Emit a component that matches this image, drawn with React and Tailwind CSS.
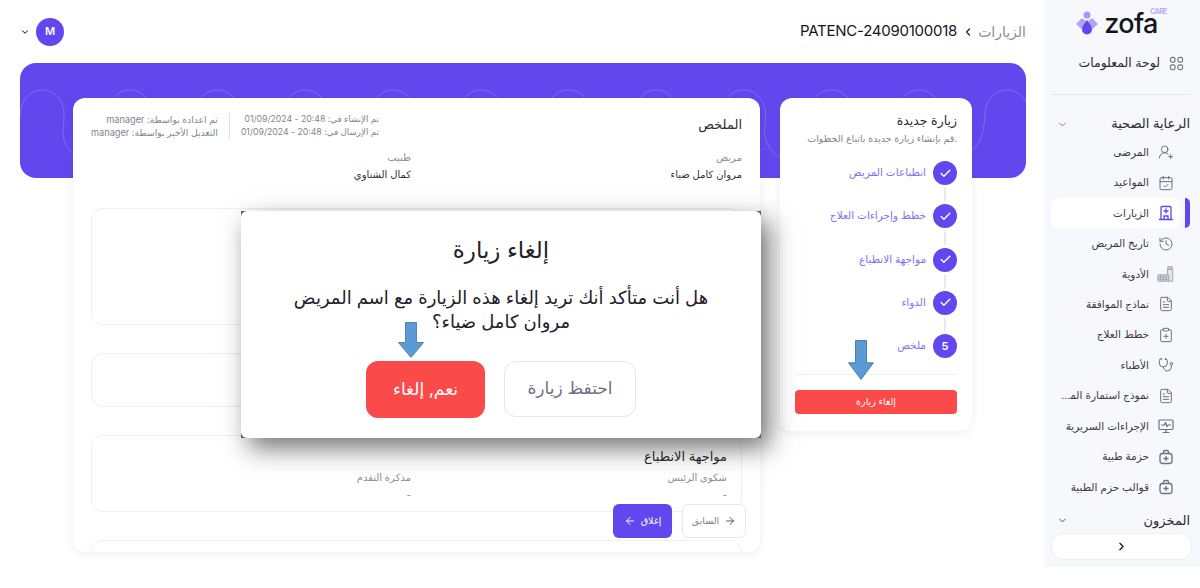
import {
  ArrowLeft, ArrowRight, CalendarCheck, Check, ChevronDown, ChevronLeft, ChevronRight,
  ClipboardPlus, FileText, History, Stethoscope, UserRoundPlus,
} from "lucide-react";

const fontStack = "font-['Inter','Noto_Sans','DejaVu_Sans',sans-serif]";

function MedsIcon() {
  return (
    <svg viewBox="0 0 20 20" className="w-[18px] h-[18px]" fill="none" stroke="#9aa1b5" strokeWidth="1">
      <rect x="12" y="2" width="5" height="3" fill="#c9cdd9" />
      <path d="M11.500 5h6v13h-6z" fill="#e2e4ec" />
      <path d="M1 11h12v7H1z" fill="#dfe2ea" />
      <path d="M1 13.500h12M1 16h12M4 11v7M7 11v7M10 11v7" />
    </svg>
  );
}

function GridIcon({ className }) {
  return (
    <svg viewBox="0 0 16 16" className={className} fill="none" stroke="currentColor" strokeWidth="1.200">
      <rect x="1.500" y="1.500" width="5" height="5" rx="2" />
      <rect x="9.500" y="1.500" width="5" height="5" rx="2" />
      <rect x="1.500" y="9.500" width="5" height="5" rx="2" />
      <rect x="9.500" y="9.500" width="5" height="5" rx="2" />
    </svg>
  );
}

function ClinicIcon({ className }) {
  return (
    <svg viewBox="0 0 16 16" className={className} fill="none" stroke="currentColor" strokeWidth="1.300" strokeLinecap="round">
      <path d="M3 14.500V2.500a1 1 0 0 1 1-1h8a1 1 0 0 1 1 1v12M1.500 14.500h13" />
      <path d="M8 4v4M6 6h4M6 14.500v-3.500h4v3.500" />
    </svg>
  );
}

function ScreenIcon({ className }) {
  return (
    <svg viewBox="0 0 16 16" className={className} fill="none" stroke="currentColor" strokeWidth="1.200" strokeLinecap="round" strokeLinejoin="round">
      <rect x="1" y="2" width="14" height="9.500" rx="1" />
      <path d="M8 11.500V14.500M5 14.500h6M3.500 7h3l1-2.500 1.500 4 1-1.500h2.500" />
    </svg>
  );
}

function KitIcon({ className }) {
  return (
    <svg viewBox="0 0 16 16" className={className} fill="none" stroke="currentColor" strokeWidth="1.300" strokeLinecap="round">
      <rect x="2" y="4.500" width="12" height="10" rx="2.500" />
      <path d="M5.500 4.500V3a1.500 1.500 0 0 1 1.500-1.500h2A1.500 1.500 0 0 1 10.500 3v1.500M8 7.500v4M6 9.500h4" />
    </svg>
  );
}

const navItems = [
  { label: "المرضى", Icon: UserRoundPlus },
  { label: "المواعيد", Icon: CalendarCheck },
  { label: "الزيارات", Icon: ClinicIcon, active: true },
  { label: "تاريخ المريض", Icon: History },
  { label: "الأدوية", Icon: MedsIcon },
  { label: "نماذج الموافقة", Icon: FileText },
  { label: "خطط العلاج", Icon: ClipboardPlus },
  { label: "الأطباء", Icon: Stethoscope },
  { label: "نموذج استمارة المريض", Icon: FileText },
  { label: "الإجراءات السريرية", Icon: ScreenIcon },
  { label: "حزمة طبية", Icon: KitIcon },
  { label: "قوالب حزم الطبية", Icon: KitIcon },
];

const steps = ["انطباعات المريض", "خطط وإجراءات العلاج", "مواجهة الانطباع", "الدواء"];

function Logo() {
  return (
    <div dir="ltr" className="flex items-center justify-center gap-[5px] h-[46px] pr-[15px]">
      <svg viewBox="0 0 24 24" className="w-[24px] h-[24px]">
        <circle cx="12" cy="4" r="3.500" fill="#a996f5" />
        <path d="M1 13l5.500-5.500c2 0 4 2 5 4-1 3-3 6-5 6.500z" fill="#b3a2f6" />
        <path d="M23 13l-5.500-5.500c-2 0-4 2-5 4 1 3 3 6 5 6.500z" fill="#b3a2f6" />
        <path d="M12 9c2 3 5 6 5 9.500a5 5 0 0 1-10 0c0-3.500 3-6.500 5-9.500z" fill="#6347ee" />
      </svg>
      <div className="relative text-[27px] leading-none font-medium text-[#15151c] font-['Inter',sans-serif] tracking-tight">
        zofa
        <span className="absolute right-[-9px] top-[-2px] text-[7px] font-bold text-[#b9acf8]">CARE</span>
      </div>
    </div>
  );
}

function Sidebar() {
  return (
    <aside className="w-[156px] h-[567px] shrink-0 bg-[#f7f8fc] flex flex-col pr-[3px] pl-[7px]">
      <Logo />
      <div className="flex items-center gap-[9px] h-[26px] mt-[4px] pr-[13px] text-[12.500px] text-[#2b2b33]">
        <GridIcon className="w-[15px] h-[15px] text-[#6b7280]" />
        <span>لوحة المعلومات</span>
      </div>
      <div className="h-px bg-[#e3e5ec] mt-[18px] mb-[16px] mr-[7px]" />
      <div className="flex items-center justify-between h-[26px] mr-[7px] text-[13px] text-[#2b2b33]">
        <span>الرعاية الصحية</span>
        <ChevronDown className="w-[11px] h-[11px] text-[#7a62f0] ml-[6px]" />
      </div>
      <nav className="flex flex-col">
        {navItems.map(({ label, Icon, active }) => (
          <div key={label} className="relative flex items-center h-[30.450px]">
            {active && (
              <span className="absolute right-[7px] top-0 w-[5px] h-[30px] rounded-r-full bg-[#6347ee]" />
            )}
            <div className={"flex items-center gap-[8px] h-[30px] w-[129px] mr-[17px] pr-[5px] pl-[9px] rounded-lg " + (active ? "bg-white" : "")}>
              <span className={"w-[18px] flex justify-center shrink-0 " + (active ? "text-[#6347ee]" : "text-[#6b7280]")}>
                <Icon className="w-[16px] h-[16px]" strokeWidth={1.5} />
              </span>
              <span className="pt-[1px] text-[10.500px] text-[#3a3a44] truncate">{label}</span>
            </div>
          </div>
        ))}
      </nav>
      <div className="flex items-center justify-between h-[26px] mt-[5px] mr-[7px] text-[13px] text-[#2b2b33]">
        <span>المخزون</span>
        <ChevronDown className="w-[11px] h-[11px] text-[#444] ml-[6px]" />
      </div>
      <button className="h-[27px] w-[141px] mr-[5px] bg-white border border-[#eceef3] rounded-xl flex items-center justify-center text-[#222]">
        <ChevronRight className="w-[13px] h-[13px]" strokeWidth={2.500} />
      </button>
    </aside>
  );
}

function BannerWaves() {
  const centers = Array.from({ length: 12 }, (_, i) => 42 + i * 87.700);
  return (
    <svg className="absolute inset-0 w-full h-full" viewBox="20 63 1006 115" fill="none" stroke="#ffffff" strokeOpacity="0.18" preserveAspectRatio="none">
      {centers.map((c) => (
        <path
          key={c}
          d={`M${c - 22} 118 C${c - 22} 100 ${c - 12} 90 ${c} 90 C${c + 14} 90 ${c + 22} 102 ${c + 22} 114 C${c + 22} 128 ${c + 18} 136 ${c + 26} 148 C${c + 32} 156 ${c + 40} 160 ${c + 46} 156 C${c + 58} 150 ${c + 65} 136 ${c + 65.700} 118`}
        />
      ))}
    </svg>
  );
}

function Field({ label, value }) {
  return (
    <div>
      <div className="text-[10px] leading-[14px] text-[#8a8f9c]">{label}</div>
      <div className="text-[10px] leading-[14px] mt-[3px] text-[#33333b]">{value}</div>
    </div>
  );
}

function SummaryCard() {
  return (
    <section className="relative w-[687px] h-[454px] bg-white rounded-xl shadow-[0_2px_10px_rgba(30,30,60,0.07)] overflow-hidden px-[18px] pt-[15px]">
      <div className="flex justify-between items-start">
        <h2 className="text-[13px] mt-[2px] text-[#2b2b33]">الملخص</h2>
        <div className="flex items-center leading-[13px] text-[#80848f]">
          <div className="flex flex-col text-[8.700px] pl-[11px] border-l border-[#dfe1e7]">
            <span>تم الإنشاء في: 20:48 - 01/09/2024</span>
            <span>تم الإرسال في: 20:48 - 01/09/2024</span>
          </div>
          <div className="flex flex-col text-[9.200px] pr-[11px]">
            <span>تم اعداده بواسطة: manager</span>
            <span>التعديل الأخير بواسطة: manager</span>
          </div>
        </div>
      </div>
      <div className="grid grid-cols-[331px_1fr] mt-[11px]">
        <Field label="مريض" value="مروان كامل ضياء" />
        <Field label="طبيب" value="كمال الشناوي" />
      </div>
      <div className="h-[117px] mt-[27px] border border-[#eeeff3] rounded-xl" />
      <div className="h-[54px] mt-[28px] border border-[#eeeff3] rounded-xl" />
      <div className="h-[77px] mt-[28px] border border-[#eeeff3] rounded-xl px-[14px] pt-[11px]">
        <h3 className="text-[13px] text-[#2b2b33]">مواجهة الانطباع</h3>
        <div className="grid grid-cols-[316px_1fr] mt-[3px]">
          <div>
            <div className="text-[10px] leading-[14px] text-[#8a8f9c]">شكوى الرئيس</div>
            <div className="text-[10px] leading-[14px] mt-[4px] text-[#8a8f9c]">-</div>
          </div>
          <div>
            <div className="text-[10px] leading-[14px] text-[#8a8f9c]">مذكرة التقدم</div>
            <div className="text-[10px] leading-[14px] mt-[4px] text-[#8a8f9c]">-</div>
          </div>
        </div>
      </div>
      <div className="h-[40px] mt-[28px] border border-[#eeeff3] rounded-xl" />
      <div className="absolute left-[540px] top-[406px] flex gap-[10px]">
        <button className="w-[64px] h-[34px] bg-white border border-[#e6e8ee] rounded-md flex items-center justify-center gap-[5px] text-[9.500px] text-[#7a7f8c]">
          <ArrowRight className="w-[12px] h-[12px] text-[#555b6b]" />
          <span>السابق</span>
        </button>
        <button className="w-[59px] h-[34px] bg-[#6347ee] rounded-md flex items-center justify-center gap-[5px] text-[9.500px] text-white">
          <span>إغلاق</span>
          <ArrowLeft className="w-[12px] h-[12px]" />
        </button>
      </div>
    </section>
  );
}

function WizardCard() {
  return (
    <section className="w-[192px] h-[333px] bg-white rounded-xl shadow-[0_2px_10px_rgba(30,30,60,0.07)] px-[15px] pt-[14px]">
      <h2 className="text-[12.500px] leading-[18px] text-[#2b2b33]">زيارة جديدة</h2>
      <p dir="ltr" className="text-[9.500px] leading-[14px] mt-[2px] text-right text-[#80848f] whitespace-nowrap">قم بإنشاء زيارة جديدة باتباع الخطوات.</p>
      <ol className="mt-[15px]">
        {steps.map((s) => (
          <li key={s}>
            <div className="flex items-center gap-[7px] h-[24px] text-[10.500px] text-[#8470f5]">
              <span className="w-[24px] h-[24px] rounded-full bg-[#6347ee] flex items-center justify-center shrink-0">
                <Check className="w-[13px] h-[13px] text-white" strokeWidth={2.500} />
              </span>
              <span className="whitespace-nowrap">{s}</span>
            </div>
            <div className="w-[2px] h-[19.300px] mr-[11px] py-[3px]">
              <div className="h-full bg-[#e9eaef]" />
            </div>
          </li>
        ))}
        <li className="flex items-center gap-[7px] h-[24px] text-[10.500px] text-[#8470f5]">
          <span className="w-[24px] h-[24px] rounded-full bg-[#6347ee] flex items-center justify-center shrink-0 text-white text-[11px] font-semibold">5</span>
          <span>ملخص</span>
        </li>
      </ol>
      <div className="h-px bg-[#eeeff3] mt-[16px]" />
      <button className="w-full h-[24px] mt-[15px] bg-[#fb4a4a] rounded text-white text-[9.500px]">إلغاء زيارة</button>
    </section>
  );
}

function DownArrow({ className }) {
  return (
    <svg viewBox="0 0 26 36" preserveAspectRatio="none" className={className}>
      <path d="M7.500 .5h11v20h7L13 35.500.5 20.500h7z" fill="#5b9bd5" stroke="#41719c" strokeWidth="0.800" />
    </svg>
  );
}

function CancelDialog() {
  return (
    <div className="absolute left-[241px] top-[211px] w-[520px] h-[227px] bg-[#5a5a5a] shadow-[8px_10px_24px_rgba(0,0,0,0.55)]">
      <div className="h-full bg-white rounded-md flex flex-col items-center pt-[23px]">
        <h2 className="text-[23px] leading-[32px] text-[#22222a]">إلغاء زيارة</h2>
        <p className="w-[440px] mt-[20px] text-[18px] leading-[24px] text-center text-[#22222a]">
          هل أنت متأكد أنك تريد إلغاء هذه الزيارة مع اسم المريض مروان كامل ضياء؟
        </p>
        <div className="flex gap-[19px] mt-[27px]">
          <button className="w-[132px] h-[56px] bg-white border border-[#e4e6ec] rounded-xl text-[17px] text-[#6b7080]">احتفظ زيارة</button>
          <button className="w-[119px] h-[57px] bg-[#fb4a4a] rounded-xl text-[17px] text-white">نعم, إلغاء</button>
        </div>
      </div>
    </div>
  );
}

export default function App() {
  return (
    <div dir="rtl" className={"relative w-[1200px] h-[588px] bg-white flex overflow-hidden " + fontStack}>
      <Sidebar />
      <main className="flex-1 pr-[18px] pl-[20px]">
        <header className="h-[63px] flex items-center justify-between">
          <div className="flex items-center gap-[4.500px]">
            <span className="text-[14px] text-[#8a8f9c]">الزيارات</span>
            <ChevronLeft className="w-[12px] h-[12px] text-[#222]" strokeWidth={2.500} />
            <span className="text-[15px] tracking-[-0.25px] text-[#15151c] font-['Inter',sans-serif]">PATENC-24090100018</span>
          </div>
          <div className="flex items-center gap-[6px]">
            <span className="w-[28px] h-[28px] rounded-full bg-[#6347ee] flex items-center justify-center text-white text-[11px] font-semibold">M</span>
            <ChevronDown className="w-[10px] h-[10px] text-[#333]" strokeWidth={2.500} />
          </div>
        </header>
        <div className="relative h-[115px] bg-[#6347ee] rounded-2xl">
          <BannerWaves />
        </div>
        <div className="relative flex gap-[20px] pr-[54px] -mt-[80px]">
          <WizardCard />
          <SummaryCard />
        </div>
      </main>
      <CancelDialog />
      <DownArrow className="absolute left-[398px] top-[322px] w-[26px] h-[36px]" />
      <DownArrow className="absolute left-[848px] top-[340px] w-[26px] h-[40px]" />
    </div>
  );
}
